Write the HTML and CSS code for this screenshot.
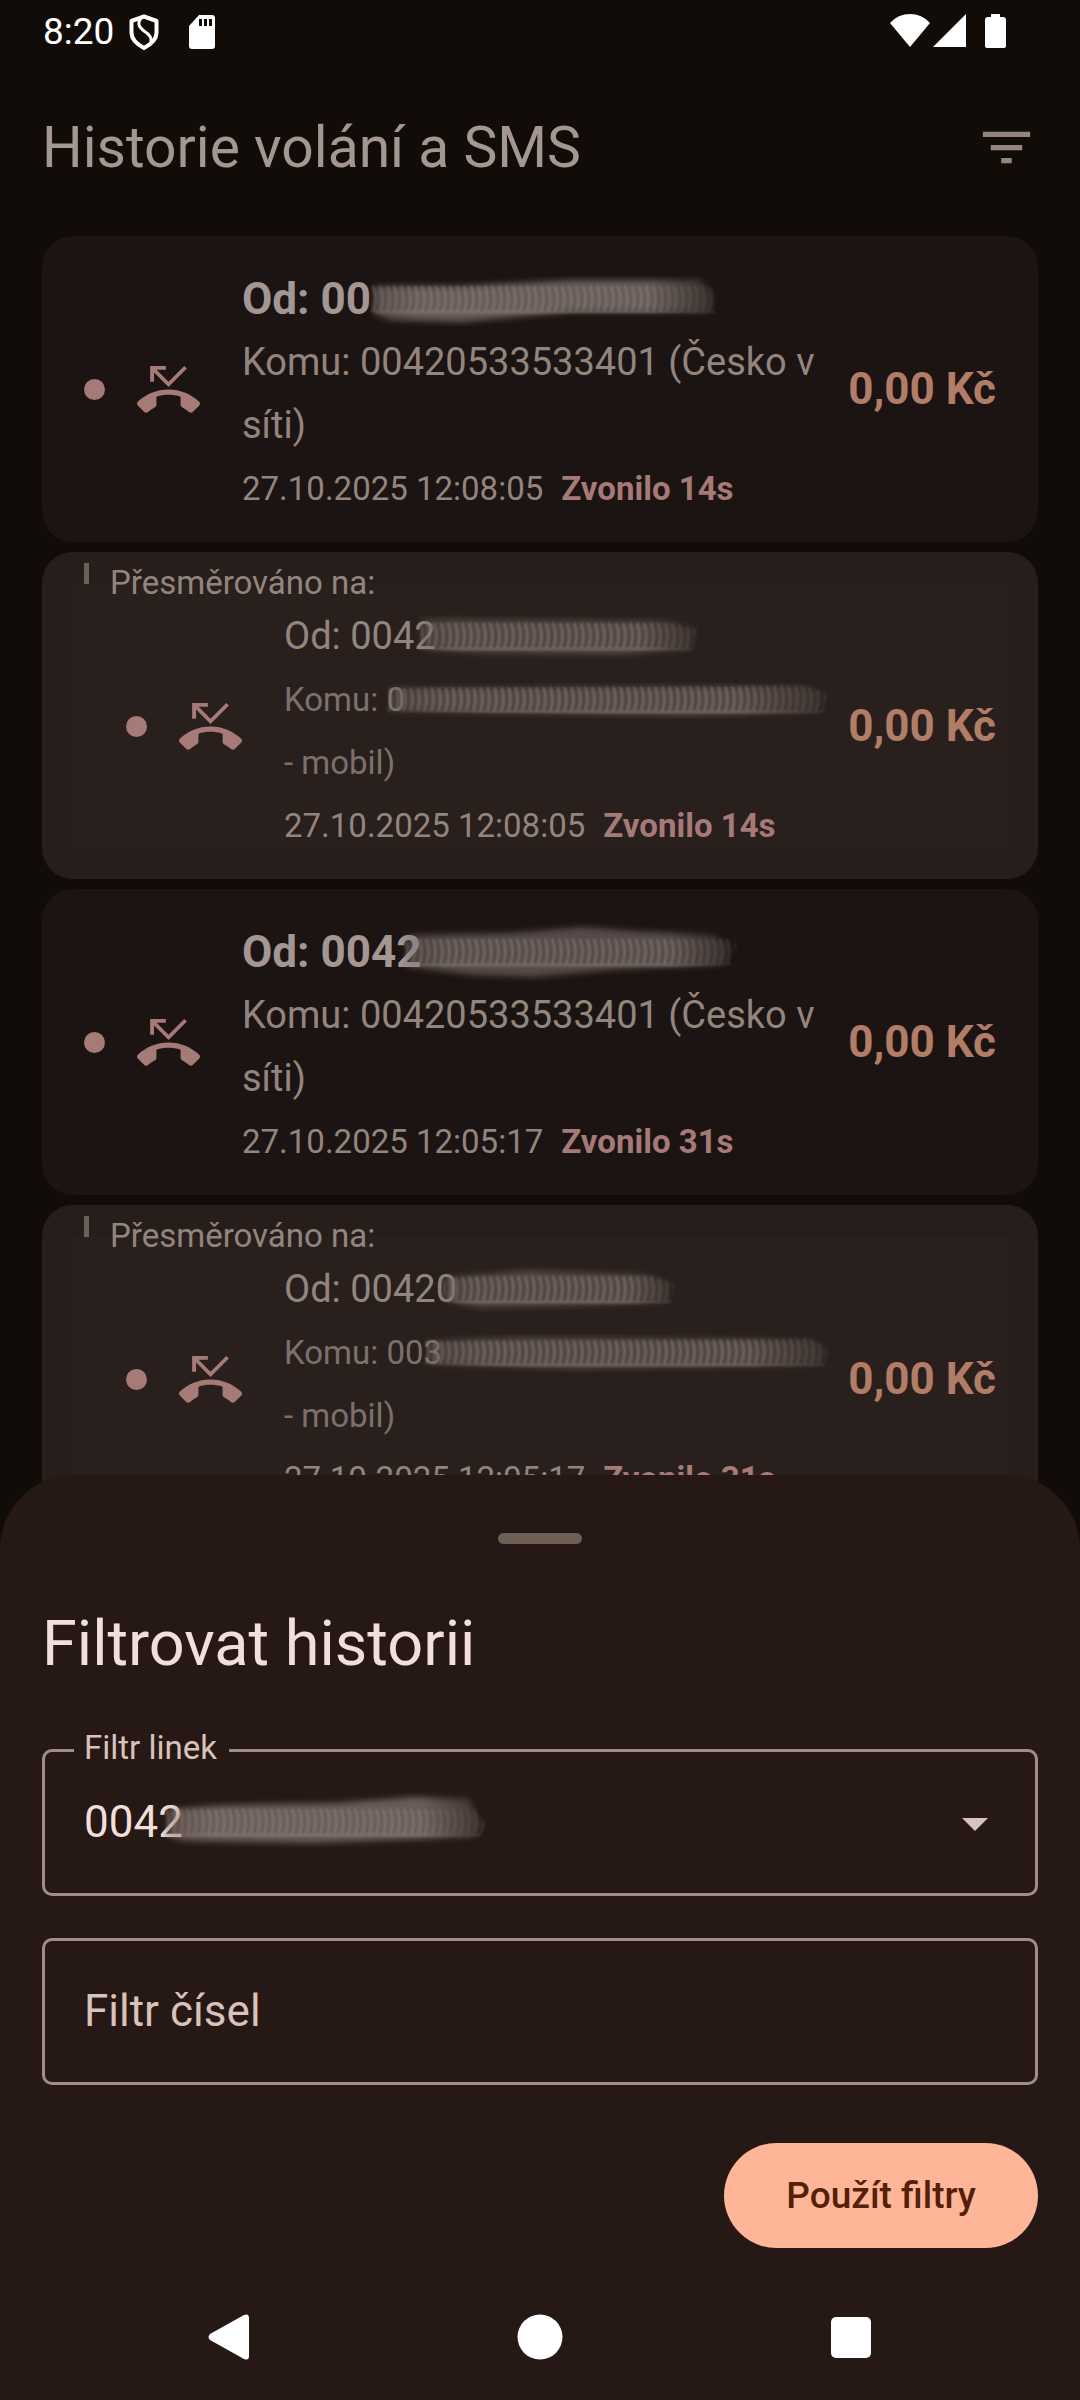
FILE: index.html
```html
<!DOCTYPE html>
<html lang="cs">
<head>
<meta charset="utf-8">
<meta name="viewport" content="width=device-width, initial-scale=1">
<title>Historie volání a SMS</title>
<link rel="stylesheet" href="styles.css">
</head>
<body>
<svg class="defs" width="0" height="0" aria-hidden="true">
  <defs>
    <symbol id="missed" viewBox="0 0 24 24"><path d="M6.5 5.5L12 11l7-7-1-1-6 6-4.5-4.5H11V3H5v6h1.5V5.5zm17.21 11.17C20.66 13.78 16.54 12 12 12 7.46 12 3.34 13.78.29 16.67c-.18.18-.29.43-.29.71s.11.53.29.71l2.48 2.48c.18.18.43.29.71.29.27 0 .52-.11.7-.28.79-.74 1.69-1.36 2.66-1.85.33-.16.56-.5.56-.9v-3.1C8.85 14.25 10.4 14 12 14s3.15.25 4.6.72v3.1c0 .4.23.74.56.9.98.49 1.87 1.12 2.67 1.85.18.18.43.28.7.28.28 0 .53-.11.71-.29l2.48-2.48c.18-.18.29-.43.29-.71s-.12-.52-.3-.7z"/></symbol>
    <filter id="soft" x="-5%" y="-20%" width="110%" height="140%"><feGaussianBlur stdDeviation="3"/></filter>
    <filter id="softer" x="-5%" y="-20%" width="110%" height="140%"><feGaussianBlur stdDeviation="1"/></filter>
    <linearGradient id="fade"><stop offset="0" stop-color="#fff" stop-opacity=".6"/><stop offset=".2" stop-color="#fff"/><stop offset=".75" stop-color="#fff"/><stop offset="1" stop-color="#fff" stop-opacity="0"/></linearGradient>
    <mask id="fadeMask" maskContentUnits="objectBoundingBox"><rect x="-.1" y="-.5" width="1.2" height="2" fill="url(#fade)"/></mask>
    <pattern id="rings" width="14" height="63" patternUnits="userSpaceOnUse"><path d="M2 18q5 12 0 26M9 18q5 12 0 26M0 44h14" fill="none" stroke="currentColor" stroke-width="3"/></pattern>
  </defs>
</svg>

<div class="screen">
  <div class="status">
    <span class="clock">8:20</span>
    <svg class="shield" width="30" height="36" viewBox="0 0 30 36" fill="none" stroke="#fff" stroke-width="4" stroke-linejoin="round"><path d="M15 2.500L27.500 7v12c0 6-6 11.500-12.500 15C8.500 30.500 2.500 25 2.500 19V7z"/><path d="M12 4c-4 6-2 9 3 13 5 3 8 6 7 11" stroke-width="3"/></svg>
    <svg class="sdcard" width="26" height="34" viewBox="0 0 26 34"><path fill="#fff" d="M10 0h13q3 0 3 3v28q0 3-3 3H3q-3 0-3-3V11z"/><path fill="#110c08" d="M10 4h3v7h-3zM15 4h3v7h-3zM20 4h3v7h-3z"/></svg>
    <svg class="signals" width="116" height="35" viewBox="0 0 116 35" fill="#fff"><path d="M0 9Q8 0 20 0t20 9L20 33zM76 0v33H43zM101 0h9v3h3q3 0 3 3v26q0 2-3 2h-15q-3 0-3-2V6q0-3 3-3h3z"/></svg>
  </div>

  <header class="topbar">
    <h1>Historie volání a SMS</h1>
    <button class="filter" type="button" aria-label="Filtrovat"><svg width="63" height="63" viewBox="0 0 24 24"><path fill="currentColor" d="M10 18h4v-2h-4v2zM3 6v2h18V6H3zm3 7h12v-2H6v2z"/></svg></button>
  </header>

  <ul class="calls">
    <li class="card">
      <div class="row">
        <span class="dot"></span>
        <svg class="missed"><use href="#missed"/></svg>
        <div class="info">
          <div class="line from">Od: 00<svg class="smudge bright" width="346" height="63"><g mask="url(#fadeMask)"><path class="haze" d="M3 18L90 18 200 12 330 12 342 26 340 44 200 44 90 54 20 52 3 46z"/><path class="marks" d="M0 18L90 18 200 12 330 12 346 26 344 45 200 45 90 50 20 48 0 44z"/></g></svg></div>
          <div class="to">Komu: 00420533533401 (Česko v síti)</div>
          <div class="line meta">27.10.2025 12:08:05 <strong>Zvonilo 14s</strong></div>
        </div>
        <span class="price">0,00 Kč</span>
      </div>
    </li>
    <li class="card forwarded">
      <div class="via">Přesměrováno na:</div>
      <div class="row">
        <span class="dot"></span>
        <svg class="missed"><use href="#missed"/></svg>
        <div class="info">
          <div class="line to">Od: 0042<svg class="smudge tuck" width="284" height="63"><g mask="url(#fadeMask)"><path class="haze" d="M4 14L250 16 278 24 274 44 200 50 60 48 4 44z"/><path class="marks" d="M0 14L250 17 278 24 274 46 60 47 0 44z"/></g></svg></div>
          <div class="line minor">Komu: 0<svg class="smudge tuck" width="440" height="63"><g mask="url(#fadeMask)"><path class="haze" d="M4 20L420 18 436 26 430 44 300 48 4 43z"/><path class="marks" d="M0 20L420 18 440 26 436 45 300 47 0 43z"/></g></svg></div>
          <div class="minor">- mobil)</div>
          <div class="line meta">27.10.2025 12:08:05 <strong>Zvonilo 14s</strong></div>
        </div>
        <span class="price">0,00 Kč</span>
      </div>
    </li>
    <li class="card">
      <div class="row">
        <span class="dot"></span>
        <svg class="missed"><use href="#missed"/></svg>
        <div class="info">
          <div class="line from">Od: 0042<svg class="smudge dim tuck" width="334" height="63"><g mask="url(#fadeMask)"><path class="haze" d="M4 14L110 12 180 6 230 10 310 14 328 24 322 44 220 48 130 56 70 54 4 46z"/><path class="marks" d="M0 12L110 14 180 8 230 12 320 14 334 24 328 44 220 48 130 52 0 46z"/></g></svg></div>
          <div class="to">Komu: 00420533533401 (Česko v síti)</div>
          <div class="line meta">27.10.2025 12:05:17 <strong>Zvonilo 31s</strong></div>
        </div>
        <span class="price">0,00 Kč</span>
      </div>
    </li>
    <li class="card forwarded">
      <div class="via">Přesměrováno na:</div>
      <div class="row">
        <span class="dot"></span>
        <svg class="missed"><use href="#missed"/></svg>
        <div class="info">
          <div class="line to">Od: 00420<svg class="smudge tuck" width="240" height="63"><g mask="url(#fadeMask)"><path class="haze" d="M4 20L90 12 210 17 232 26 228 44 130 48 40 50 4 42z"/><path class="marks" d="M4 20L90 14 210 17 236 26 232 45 130 48 40 50 4 42z"/></g></svg></div>
          <div class="line minor">Komu: 003<svg class="smudge tuck" width="404" height="63"><g mask="url(#fadeMask)"><path class="haze" d="M4 20L100 16 388 19 402 28 398 44 150 48 4 43z"/><path class="marks" d="M0 20L388 18 404 28 400 45 150 47 0 43z"/></g></svg></div>
          <div class="minor">- mobil)</div>
          <div class="line meta">27.10.2025 12:05:17 <strong>Zvonilo 31s</strong></div>
        </div>
        <span class="price">0,00 Kč</span>
      </div>
    </li>
  </ul>
</div>

<section class="sheet" role="dialog" aria-labelledby="sheet-title">
  <div class="handle"></div>
  <h2 id="sheet-title">Filtrovat historii</h2>
  <form class="filters">
    <div class="field">
      <select id="lines" class="control"><option>0042</option></select>
      <label class="notch" for="lines">Filtr linek</label>
      <svg class="smudge pale" width="324" height="63"><g mask="url(#fadeMask)"><path class="haze" d="M4 18L60 14 170 12 250 6 305 8 318 34 312 46 150 52 20 50 4 46z"/><path class="marks" d="M0 18L60 14 170 12 250 6 305 8 322 34 316 46 150 49 0 48z"/></g></svg>
      <svg class="caret" width="26" height="13" viewBox="0 0 26 13"><path fill="currentColor" d="M0 0h26L13 13z"/></svg>
    </div>
    <div class="field">
      <input id="numbers" class="control" type="text">
      <label class="inside" for="numbers">Filtr čísel</label>
    </div>
    <button class="apply" type="button">Použít filtry</button>
  </form>
  <nav class="system">
    <button type="button" aria-label="Zpět"><svg width="42" height="46" viewBox="0 0 42 46"><path fill="#fff" d="M2 20L36 1q5-2 5 3v38q0 5-5 3L2 26q-3-3 0-6z"/></svg></button>
    <button type="button" aria-label="Domů"><svg width="46" height="46" viewBox="0 0 46 46"><circle cx="23" cy="23" r="22.500" fill="#fff"/></svg></button>
    <button type="button" aria-label="Přehled"><svg width="40" height="41" viewBox="0 0 40 41"><rect width="40" height="41" rx="5" fill="#fff"/></svg></button>
  </nav>
</section>
</body>
</html>
```
FILE: styles.css
```css
* {
  box-sizing: border-box;
}

body {
  margin: 0;
  background: #110c08;
  color: #93857e;
  font-family: Roboto, "Noto Sans", sans-serif;
  font-size: 38px;
  line-height: 63px;
}

button {
  padding: 0;
  border: 0;
  background: none;
  font: inherit;
}

svg {
  display: block;
  flex: none;
}

.defs {
  position: absolute;
}

.screen {
  height: 100vh;
  overflow: hidden;
}

.status {
  display: flex;
  align-items: center;
  height: 63px;
  padding: 0 74px 0 43px;
}

.clock {
  color: #fff;
  font-size: 37px;
}

.shield {
  margin-left: 15px;
}

.sdcard {
  margin-left: 30px;
}

.signals {
  margin-left: auto;
}

.topbar {
  display: flex;
  align-items: center;
  justify-content: space-between;
  height: 168px;
  padding: 0 42px;
}

h1,
h2 {
  margin: 0;
  font-weight: 400;
}

h1 {
  color: #a39693;
  font-size: 57px;
}

.filter {
  display: flex;
  color: #93857e;
}

.calls {
  display: flex;
  flex-direction: column;
  gap: 10px;
  margin: 0;
  padding: 5px 42px 0;
  list-style: none;
}

.card {
  border-radius: 31px;
  background: #1c1412;
}

.row {
  display: flex;
  align-items: center;
  padding: 22px 42px;
}

.forwarded {
  background: linear-gradient(#29201e, #29201e) center / calc(100% - 62px) calc(100% - 62px) no-repeat #271e1c;
}

.forwarded .row {
  padding: 0 42px 22px 84px;
}

.via {
  display: flex;
  gap: 21px;
  height: 43px;
  padding: 11px 42px 0;
  font-size: 33px;
  line-height: 40px;
}

.via::before {
  content: "";
  width: 5px;
  height: 21px;
  background: #6b5f5c;
}

.dot {
  flex: none;
  width: 21px;
  height: 21px;
  border-radius: 50%;
  background: #a57a77;
}

.missed {
  width: 63px;
  height: 63px;
  margin: 0 42px 0 32px;
  fill: #a57a77;
}

.info {
  flex: 1;
  min-width: 0;
  padding-top: 10px;
}

.line {
  display: flex;
  white-space: nowrap;
}

.from {
  color: #a39693;
  font-size: 44px;
  font-weight: 700;
}

.minor {
  color: #7d706b;
  font-size: 33px;
}

.meta {
  gap: 18px;
  font-size: 33px;
}

.meta strong {
  color: #a57a77;
}

.price {
  margin-left: 21px;
  color: #b17d67;
  font-size: 44px;
  font-weight: 700;
  white-space: nowrap;
}

.smudge {
  color: #6c5f5a;
  overflow: visible;
}

.bright {
  color: #968a87;
}

.dim {
  color: #7d716e;
}

.tuck {
  margin-left: -18px;
}

.haze {
  fill: currentColor;
  opacity: .6;
  filter: url(#soft);
}

.marks {
  fill: url(#rings);
  opacity: .5;
  filter: url(#softer);
}

.sheet {
  position: fixed;
  right: 0;
  bottom: 0;
  left: 0;
  padding-top: 58px;
  border-radius: 74px 74px 0 0;
  background: #251815;
}

.handle {
  width: 84px;
  height: 11px;
  margin: 0 auto 58px;
  border-radius: 6px;
  background: #6d5e56;
}

h2 {
  padding: 0 42px;
  color: #f2dfd9;
  font-size: 63px;
  line-height: 84px;
}

.filters {
  display: flex;
  flex-direction: column;
  gap: 42px;
  padding: 63px 42px 26px;
}

.field {
  position: relative;
}

.control {
  display: block;
  width: 100%;
  height: 147px;
  padding: 0 39px;
  appearance: none;
  border: 3px solid #a08d86;
  border-radius: 10px;
  outline: 0;
  background: none;
  color: #f2dfd9;
  font: inherit;
  font-size: 44px;
}

.field label {
  position: absolute;
  color: #d8c2ba;
  pointer-events: none;
}

.notch {
  top: -21px;
  left: 32px;
  padding: 0 12px 0 10px;
  background: #251815;
  font-size: 33px;
  line-height: 40px;
}

.inside {
  top: 42px;
  left: 42px;
  font-size: 44px;
}

.pale {
  position: absolute;
  top: 42px;
  left: 122px;
  color: #9a8a84;
  pointer-events: none;
}

.caret {
  position: absolute;
  top: 69px;
  right: 50px;
  color: #d8c2ba;
  pointer-events: none;
}

.apply {
  align-self: flex-end;
  height: 105px;
  margin-top: 16px;
  padding: 0 62px;
  border-radius: 53px;
  background: #ffb597;
  color: #542007;
  font-size: 37px;
  font-weight: 500;
}

.system {
  display: grid;
  grid-template-columns: repeat(3, 1fr);
  height: 126px;
  padding: 0 73px;
}

.system button {
  display: flex;
  align-items: center;
  justify-content: center;
}
```
